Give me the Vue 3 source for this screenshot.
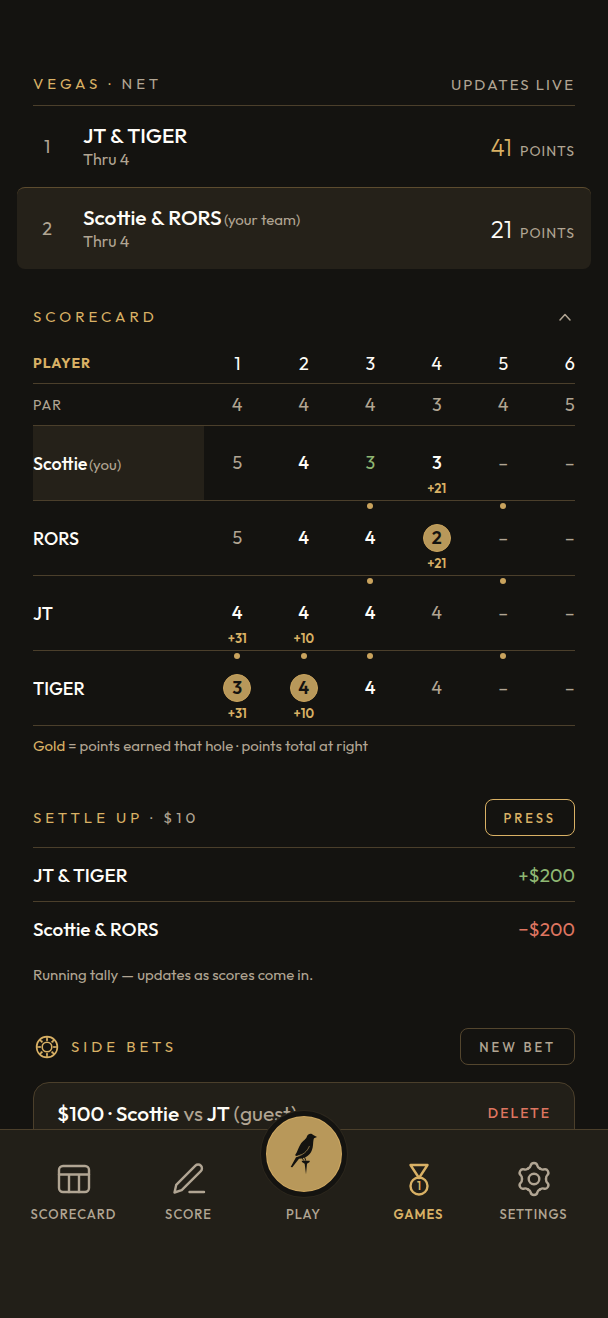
<template>
  <div class="shell">
    <main class="content">

      <section class="game">
        <header class="section-head game-head">
          <h2 class="title">Vegas <span class="title-dot">·</span> <span class="title-muted">Net</span></h2>
          <span class="live">Updates live</span>
        </header>
        <ol class="standings">
          <li v-for="team in teams" :key="team.rank" :class="['standing', { mine: team.mine }]">
            <span class="rank">{{ team.rank }}</span>
            <div class="team">
              <div class="team-name">{{ team.name }} <span v-if="team.mine" class="note">(your team)</span></div>
              <div class="thru">Thru 4</div>
            </div>
            <div class="points"><span :class="['points-value', { leader: team.rank === 1 }]">{{ team.points }}</span><span class="points-unit">Points</span></div>
          </li>
        </ol>
      </section>

      <section class="scorecard">
        <header class="card-head">
          <h2 class="title">Scorecard</h2>
          <button class="toggle" type="button" aria-label="Toggle scorecard" :aria-expanded="open" @click="open = !open">
            <svg width="20" height="20" viewBox="0 0 20 20"><path d="M5 13l5-5.500 5 5.500"/></svg>
          </button>
        </header>
        <div v-if="open" class="table-scroll">
          <table>
            <thead>
              <tr class="holes">
                <th class="name-cell" scope="col">Player</th>
                <th v-for="hole in 6" :key="hole" scope="col">{{ hole }}</th>
              </tr>
            </thead>
            <tbody>
              <tr class="par">
                <th class="name-cell" scope="row">Par</th>
                <td v-for="(p, i) in par" :key="i">{{ p }}</td>
              </tr>
              <tr v-for="player in players" :key="player.name" class="player">
                <th :class="['name-cell', { you: player.you }]" scope="row">{{ player.name }} <span v-if="player.you" class="note">(you)</span></th>
                <td v-for="(s, i) in player.scores" :key="i">
                  <div class="score">
                    <span class="stroke-slot"><i v-if="player.dots.includes(i + 1)" class="stroke-dot"></i></span>
                    <span :class="['strokes', s.kind]">{{ s.value }}</span>
                    <span class="earned">{{ s.earned }}</span>
                  </div>
                </td>
              </tr>
            </tbody>
          </table>
        </div>
        <p class="hint"><span class="gold">Gold</span> = points earned that hole · points total at right</p>
      </section>

      <section class="settle">
        <header class="section-head settle-head">
          <h2 class="title">Settle up <span class="title-muted">· $10</span></h2>
          <button class="outline-btn primary" type="button">Press</button>
        </header>
        <div class="balance"><span>JT &amp; TIGER</span><span class="up">+$200</span></div>
        <div class="balance"><span>Scottie &amp; RORS</span><span class="down">−$200</span></div>
        <p class="tally">Running tally — updates as scores come in.</p>
      </section>

      <section class="bets">
        <header class="bets-head">
          <svg class="chip" width="28" height="26" viewBox="-1 0 28 26">
            <circle cx="13" cy="13" r="10.400"/>
            <circle cx="13" cy="13" r="4.800"/>
            <path d="M13 2.500v4.500M13 19v4.500M2.500 13h4.500M19 13h4.500M5.600 5.600l2.800 2.800M17.600 17.600l2.800 2.800M5.600 20.400l2.800-2.800M17.600 8.400l2.800-2.800"/>
            <circle cx="13" cy="13" r="7.600" class="thin"/>
          </svg>
          <h2 class="title">Side bets</h2>
          <button class="outline-btn" type="button">New bet</button>
        </header>
        <article class="bet">
          <div class="bet-name">$100 · Scottie <span class="muted">vs</span> JT <span class="muted">(guest)</span></div>
          <button class="delete" type="button">Delete</button>
        </article>
      </section>
    </main>

    <nav class="tabs">
      <a href="#scorecard" class="tab">
        <svg width="36" height="36" viewBox="0 0 36 36">
          <rect x="3" y="5" width="30" height="26" rx="4"/>
          <path d="M3 13.500h30M13 13.500V31M23 13.500V31"/>
        </svg>
        <span>Scorecard</span>
      </a>
      <a href="#score" class="tab">
        <svg width="36" height="36" viewBox="0 0 36 36">
          <path d="M3.500 31.500l1.700-7.600L24.400 4.700a3.800 3.800 0 0 1 5.400 0a3.800 3.800 0 0 1 0 5.400L10.700 29.200zM18.500 31h14.500"/>
        </svg>
        <span>Score</span>
      </a>
      <a href="#play" class="tab">
        <span class="play">
          <svg class="bird" width="28" height="42" viewBox="120 98 84 126">
            <path d="M201 110L191 105C186 98 174 98 171 108C169 117 159 121 152 131C145 141 143 154 135 165L140 167L158 160L138 171L122 200L127 201L147 175C165 174 179 165 185 151C191 139 188 124 192 114Z"/>
            <path class="wing" d="M141 169C158 164 172 154 178 138"/>
            <path class="leg" d="M156 173l5 7M164 171l3 9"/>
            <path d="M155 181h24v4l-8 5l-3 32l-4-32l-8-5z"/>
          </svg>
        </span>
        <span>Play</span>
      </a>
      <a href="#games" class="tab active" aria-current="page">
        <svg width="36" height="36" viewBox="0 0 36 36">
          <path d="M9.500 4h17L18 17z"/>
          <circle cx="18" cy="25" r="8.500"/>
          <text x="18" y="29" text-anchor="middle">1</text>
        </svg>
        <span>Games</span>
      </a>
      <a href="#settings" class="tab">
        <svg width="36" height="36" viewBox="-18 -18 36 36">
          <circle r="5.300"/>
          <path v-for="n in 6" :key="n" :transform="`rotate(${n * 60})`" d="M-6-10.400C-4.300-11.400-3.600-12-3.400-13.200C-3.100-15.100-2-16 0-16S3.100-15.100 3.400-13.200C3.600-12 4.300-11.400 6-10.400"/>
        </svg>
        <span>Settings</span>
      </a>
    </nav>
  </div>
</template>

<script setup>
import { ref } from 'vue'

const open = ref(true)

const teams = [
  { rank: 1, name: 'JT & TIGER', points: 41 },
  { rank: 2, name: 'Scottie & RORS', points: 21, mine: true },
]

const par = [4, 4, 4, 3, 4, 5]

// kind: over = muted score, birdie = green, win = gold disc
const score = (value, kind = '', earned = '') => ({ value, kind, earned })
const blank = score('–', 'over')

const players = [
  {
    name: 'Scottie',
    you: true,
    dots: [],
    scores: [score(5, 'over'), score(4), score(3, 'birdie'), score(3, '', '+21'), blank, blank],
  },
  {
    name: 'RORS',
    dots: [3, 5],
    scores: [score(5, 'over'), score(4), score(4), score(2, 'win', '+21'), blank, blank],
  },
  {
    name: 'JT',
    dots: [3, 5],
    scores: [score(4, '', '+31'), score(4, '', '+10'), score(4), score(4, 'over'), blank, blank],
  },
  {
    name: 'TIGER',
    dots: [1, 2, 3, 5],
    scores: [score(3, 'win', '+31'), score(4, 'win', '+10'), score(4), score(4, 'over'), blank, blank],
  },
]
</script>

<style>
body {
  margin: 0;
  background: #141310;
}
</style>

<style scoped>
.shell {
  --bg: #141310;
  --panel: #252119;
  --line: #4b3f2b;
  --gold: #d9b165;
  --muted: #b1a593;
  --white: #fffdf8;
  height: 100vh;
  display: flex;
  flex-direction: column;
  background: var(--bg);
  color: var(--white);
  font-family: "Outfit", "Lato", "Liberation Sans", sans-serif;
  font-size: 18px;
  font-weight: 500;
}

.content {
  flex: 1;
  min-height: 0;
  overflow-y: auto;
  scrollbar-width: none;
  padding: 63px 33px 0;
}

h2, p, ol {
  margin: 0;
  padding: 0;
}

button {
  font: inherit;
  color: inherit;
  background: none;
  border: 0;
  padding: 0;
  cursor: pointer;
}

.section-head {
  display: flex;
  align-items: center;
  justify-content: space-between;
  border-bottom: 1px solid var(--line);
}

.game-head {
  height: 42px;
}

.title {
  font-size: 15px;
  line-height: 20px;
  font-weight: 400;
  letter-spacing: 4px;
  text-transform: uppercase;
  color: var(--gold);
}

.title-muted,
.muted {
  color: var(--muted);
}

.live {
  font-size: 15px;
  font-weight: 400;
  letter-spacing: 2px;
  text-transform: uppercase;
  color: var(--muted);
}

.standings {
  list-style: none;
}

.standing {
  display: flex;
  align-items: center;
  height: 81px;
}

.standing.mine {
  margin: 0 -16px;
  padding: 0 16px;
  border-top: 1px solid #5d4c2f;
  border-radius: 8px;
  background: var(--panel);
}

.rank {
  width: 28px;
  margin-right: 22px;
  text-align: center;
  font-weight: 400;
  color: var(--muted);
}

.team {
  flex: 1;
}

.team-name {
  font-size: 21px;
  line-height: 24px;
}

.note {
  margin-left: -2px;
  font-size: 15px;
  line-height: 16px;
  font-weight: 400;
  color: var(--muted);
}

.thru {
  font-size: 16px;
  line-height: 24px;
  font-weight: 400;
  color: var(--muted);
}

.points {
  display: flex;
  align-items: baseline;
  gap: 8px;
}

.points-value {
  font-size: 24px;
  font-weight: 300;
}

.points-value.leader {
  color: var(--gold);
}

.points-unit {
  font-size: 14px;
  font-weight: 400;
  letter-spacing: 1px;
  text-transform: uppercase;
  color: var(--muted);
}

.scorecard {
  padding-top: 28px;
}

.card-head {
  display: flex;
  align-items: center;
  justify-content: space-between;
  height: 40px;
}

.toggle {
  display: flex;
}

.toggle svg {
  fill: none;
  stroke: var(--muted);
  stroke-width: 1.5;
  stroke-linecap: round;
  stroke-linejoin: round;
}

.table-scroll {
  margin-top: 6px;
  overflow-x: auto;
  scrollbar-width: none;
}

table {
  width: 570px;
  table-layout: fixed;
  border-collapse: separate;
  border-spacing: 0;
}

th,
td {
  box-sizing: border-box;
  padding: 0;
  text-align: center;
  font-weight: 400;
  border-bottom: 1px solid var(--line);
}

.name-cell {
  width: 171px;
  text-align: left;
}

.holes th {
  height: 41px;
}

.holes .name-cell {
  font-size: 14px;
  font-weight: 700;
  letter-spacing: 1px;
  text-transform: uppercase;
  color: var(--gold);
}

.par th,
.par td {
  height: 42px;
  color: var(--muted);
}

.par .name-cell {
  font-size: 14px;
  letter-spacing: 1px;
  text-transform: uppercase;
}

.player .name-cell {
  font-weight: 500;
}

.name-cell.you {
  background: var(--panel);
}

.score {
  display: grid;
  grid-template-rows: 23px 28px 23px;
  justify-items: center;
  font-weight: 500;
}

.stroke-slot {
  padding-top: 2px;
}

.stroke-dot {
  display: block;
  width: 6px;
  height: 6px;
  border-radius: 50%;
  background: #c9a35d;
}

.strokes {
  box-sizing: border-box;
  width: 28px;
  line-height: 28px;
}

.strokes.over {
  font-weight: 400;
  color: var(--muted);
}

.strokes.birdie {
  font-weight: 400;
  color: #8fb873;
}

.strokes.win {
  border: 1px solid #c9a35d;
  border-radius: 50%;
  line-height: 26px;
  font-weight: 600;
  background: #b8985a;
  color: #141310;
}

.earned {
  font-size: 13px;
  line-height: 23px;
  font-weight: 600;
  color: var(--gold);
}

.hint,
.tally {
  font-size: 15px;
  line-height: 20px;
  font-weight: 400;
  color: var(--muted);
}

.hint {
  margin-top: 10px;
}

.gold {
  color: var(--gold);
}

.settle {
  margin-top: 43px;
}

.settle-head {
  height: 37px;
  padding-bottom: 11px;
}

.outline-btn {
  box-sizing: border-box;
  height: 37px;
  padding: 0 18px;
  border: 1px solid #54462e;
  border-radius: 8px;
  font-size: 13px;
  letter-spacing: 3px;
  text-transform: uppercase;
  color: var(--muted);
}

.outline-btn.primary {
  border-color: var(--gold);
  color: var(--gold);
}

.balance {
  display: flex;
  align-items: center;
  justify-content: space-between;
  height: 53px;
  font-size: 19px;
}

.balance + .balance {
  border-top: 1px solid var(--line);
}

.up {
  font-weight: 400;
  color: #8fb873;
}

.down {
  font-weight: 400;
  color: #de7560;
}

.tally {
  margin-top: 10px;
}

.bets {
  margin-top: 43px;
}

.bets-head {
  display: flex;
  align-items: center;
  height: 37px;
}

.bets-head .title {
  flex: 1;
  margin-left: 10px;
}

.chip {
  fill: none;
  stroke: var(--gold);
  stroke-width: 1.6;
}

.chip .thin {
  stroke-width: 1;
  stroke-dasharray: 1.5 4.47;
  stroke-dashoffset: 0.75;
}

.bet {
  display: flex;
  align-items: center;
  justify-content: space-between;
  margin-top: 17px;
  padding: 16px 23px 80px;
  border: 1px solid var(--line);
  border-radius: 16px;
  background: #221f18;
}

.bet-name {
  font-size: 21px;
  line-height: 28px;
}

.bet-name .muted {
  font-weight: 400;
}

.delete {
  font-size: 14px;
  letter-spacing: 2px;
  text-transform: uppercase;
  color: #de7560;
}

.tabs {
  position: relative;
  z-index: 1;
  box-sizing: border-box;
  flex: none;
  display: grid;
  grid-template-columns: repeat(5, 1fr);
  height: 189px;
  padding: 30px 17px 0 16px;
  border-top: 1px solid var(--line);
  background: #221f18;
}

.tab {
  display: flex;
  flex-direction: column;
  align-items: center;
  gap: 7px;
  height: 64px;
  justify-content: flex-end;
  font-size: 13px;
  line-height: 20px;
  letter-spacing: 1px;
  text-transform: uppercase;
  text-decoration: none;
  color: var(--muted);
}

.tab.active {
  font-weight: 600;
  color: var(--gold);
}

.tab svg {
  fill: none;
  stroke: currentColor;
  stroke-width: 2.4;
  stroke-linecap: round;
  stroke-linejoin: round;
}

.tab text {
  font-size: 11px;
  letter-spacing: 0;
  fill: currentColor;
  stroke: none;
}

.play {
  box-sizing: border-box;
  flex: none;
  display: flex;
  align-items: center;
  justify-content: center;
  width: 86px;
  height: 86px;
  border: 5px solid #141310;
  border-radius: 50%;
  background: #b8985a;
  box-shadow: inset 0 0 0 1px #d0a962, 0 0 0 1px #2c271d;
}

.tab .bird {
  fill: #141310;
  stroke: none;
}

.bird .wing {
  fill: none;
  stroke: #b8985a;
  stroke-width: 2;
}

.bird .leg {
  fill: none;
  stroke: #141310;
  stroke-width: 3;
}
</style>
